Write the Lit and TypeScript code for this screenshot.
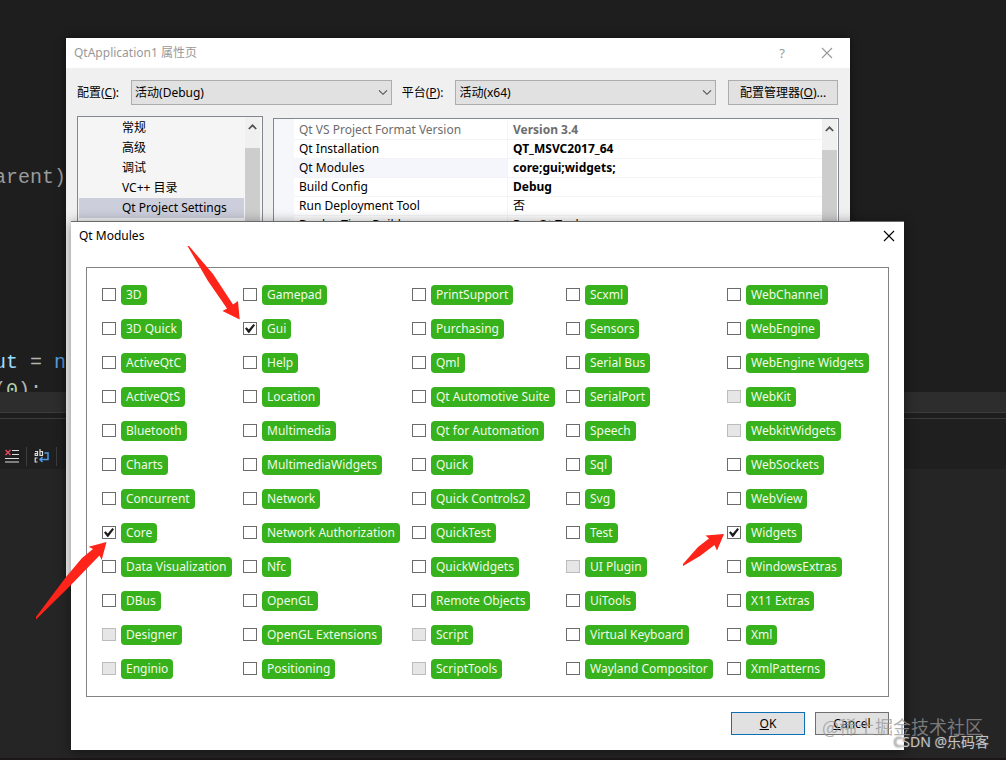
import { LitElement, html, css, svg } from "lit";
import { customElement, state } from "lit/decorators.js";

interface QtModule { name: string; off?: boolean; on?: boolean; }

const off = (name: string): QtModule => ({ name, off: true });
const on = (name: string): QtModule => ({ name, on: true });
const mod = (name: string): QtModule => ({ name });

const MODULES: QtModule[][] = [
  [...["3D", "3D Quick", "ActiveQtC", "ActiveQtS", "Bluetooth", "Charts", "Concurrent"].map(mod),
    on("Core"), mod("Data Visualization"), mod("DBus"), off("Designer"), off("Enginio")],
  [mod("Gamepad"), on("Gui"), ...["Help", "Location", "Multimedia", "MultimediaWidgets", "Network",
    "Network Authorization", "Nfc", "OpenGL", "OpenGL Extensions", "Positioning"].map(mod)],
  [...["PrintSupport", "Purchasing", "Qml", "Qt Automotive Suite", "Qt for Automation", "Quick",
    "Quick Controls2", "QuickTest", "QuickWidgets", "Remote Objects"].map(mod), off("Script"), off("ScriptTools")],
  [...["Scxml", "Sensors", "Serial Bus", "SerialPort", "Speech", "Sql", "Svg", "Test"].map(mod),
    off("UI Plugin"), ...["UiTools", "Virtual Keyboard", "Wayland Compositor"].map(mod)],
  [...["WebChannel", "WebEngine", "WebEngine Widgets"].map(mod), off("WebKit"), off("WebkitWidgets"),
    ...["WebSockets", "WebView"].map(mod), on("Widgets"),
    ...["WindowsExtras", "X11 Extras", "Xml", "XmlPatterns"].map(mod)],
];

const PROPS = [
  { name: "Qt VS Project Format Version", value: "Version 3.4", cls: "dim strong" },
  { name: "Qt Installation", value: "QT_MSVC2017_64", cls: "strong" },
  { name: "Qt Modules", value: "core;gui;widgets;", cls: "strong picked" },
  { name: "Build Config", value: "Debug", cls: "strong" },
  { name: "Run Deployment Tool", value: "否", cls: "" },
  { name: "Deploy Time Build", value: "Run Qt Tools", cls: "" },
];

const closeIcon = svg`<svg width="12" height="12" viewBox="0 0 12 12"><path d="M1 1 11 11M11 1 1 11" fill="none" stroke="currentColor" stroke-width="1.1"/></svg>`;
const upIcon = svg`<svg width="9" height="6" viewBox="0 0 9 6"><path d="M.8 5 4.500 1.300 8.200 5" fill="none" stroke="#505050" stroke-width="1.700"/></svg>`;

const FONT = css`"Noto Sans", "Noto Sans CJK SC", sans-serif`;

@customElement("editor-backdrop")
class EditorBackdrop extends LitElement {
  static styles = css`
    :host { display: flex; flex-direction: column; height: 100%; background: #1e1e1e; color: #9b9b9b; overflow: hidden; }
    .code { height: 392px; overflow: hidden; display: flex; flex-direction: column; box-sizing: border-box; padding-top: 164px;
      font: 20px/28px "Liberation Mono", monospace; white-space: pre; }
    .line { margin: 0; height: 28px; width: 66px; display: flex; justify-content: flex-end; flex: none; }
    .gap { height: 157px; flex: none; }
    .var { color: #9cdcfe; }
    .kw { color: #569cd6; }
    .num { color: #b5cea8; }
    .eq { color: #b4b4b4; }
    .scroll { height: 20px; background: #2d2d2e; border-bottom: 1px solid #3c3c3d; }
    .split { height: 5px; border-bottom: 1px solid #3c3c3d; }
    .tools { height: 50px; box-sizing: border-box; padding: 24px 5px 0; display: flex; align-items: center; gap: 7px; background: #1f1f20; }
    .bar { width: 1px; height: 19px; background: #3d3d40; }
    .pane { flex: 1; background: #252526; border-bottom: 2px solid #1b1718; }
  `;
  render() {
    return html`
      <div class="code">
        <p class="line">arent)</p>
        <div class="gap"></div>
        <p class="line"><span class="var">ut</span><span class="eq"> = </span><span class="kw">n</span></p>
        <p class="line"><span class="eq">(</span><span class="num">0</span><span class="eq">);  </span></p>
      </div>
      <div class="scroll"></div>
      <div class="split"></div>
      <div class="tools">
        <svg width="14" height="14" viewBox="0 0 14 14"><path d="M7 1.500h7M7 5.500h7M0 9.500h14M0 13h14" stroke="#ddd" stroke-width="1.200"/><path d="M.5 1 5.500 6M5.500 1 .5 6" stroke="#e0485e" stroke-width="1.500"/></svg>
        <div class="bar"></div>
        <svg width="15" height="14" viewBox="0 0 15 14" fill="none"><g stroke="#ddd" stroke-width="1.200"><path d="M1 2.500h2.500v4H1.200v-2h2.300"/><path d="M6 0v6.500h2.500v-4H6"/><path d="M3.500 9H1.200v4h2.300"/></g><path d="M10.500 4h3.500v6.500H6M8.500 8 6 10.500 8.500 13" stroke="#4c9be8" stroke-width="1.500"/></svg>
        <div class="bar"></div>
      </div>
      <div class="pane"></div>`;
  }
}

@customElement("property-window")
class PropertyWindow extends LitElement {
  static styles = css`
    :host { display: flex; flex-direction: column; background: #f0f0f0; color: #000; font: 12px/20px ${FONT}; overflow: hidden; }
    button, select { font: inherit; color: inherit; }
    .title { display: flex; align-items: center; height: 30px; background: #fff; color: #999; padding: 0 17px 0 8px; flex: none; }
    .title h1 { font: inherit; margin: 0; flex: 1; }
    .plain { border: 0; background: none; padding: 0; width: 12px; display: grid; place-items: center; }
    .help { margin-right: 33px; font-size: 13px; }
    .config { display: flex; align-items: center; padding: 12px 12px 0 11px; height: 25px; flex: none; }
    .config label { white-space: nowrap; }
    .combo { position: relative; flex: 1; display: flex; margin-left: 12px; }
    .combo select { flex: 1; min-width: 0; height: 25px; appearance: none; border: 1px solid #adadad; border-radius: 0; background: #e1e1e1; padding: 0 3px; }
    .combo svg { position: absolute; right: 4px; top: 9px; pointer-events: none; }
    .label2 { margin-left: 10px; }
    .manager { width: 110px; height: 25px; margin-left: 12px; padding: 0; border: 1px solid #adadad; background: #e1e1e1; white-space: nowrap; }
    .body { display: flex; gap: 10px; padding: 11px 11px 12px; flex: 1; min-height: 0; align-items: stretch; }
    .tree { width: 184px; flex: none; border: 1px solid #828790; background: #f5f5f5; display: flex; }
    .tree ul { list-style: none; margin: 0; padding: 1px; flex: 1; }
    .tree li { padding-left: 43px; height: 20px; white-space: nowrap; }
    .tree li.sel { background: #cccedb; }
    .rail { width: 15px; flex: none; background: #f0f0f0; display: flex; flex-direction: column; align-items: center; margin-right: 2px; }
    .rail svg { margin: 7px 0 18px; flex: none; }
    .thumb { background: #cdcdcd; width: 100%; flex: 1; }
    .sheet { flex: 1; min-width: 0; border: 1px solid #828790; margin-top: 2px; background: #fff; display: flex; overflow: hidden; }
    .sheet .rail { margin-right: 1px; }
    .margin { width: 20px; background: #f5f7fb; flex: none; }
    table { border-collapse: collapse; width: 100%; table-layout: fixed; margin-top: 2px; }
    .grow { flex: 1; min-width: 0; }
    td, th { height: 18px; line-height: 18px; padding: 0 0 0 5px; border-bottom: 1px solid #f3f4f7; font-weight: 400; text-align: left; white-space: nowrap; }
    th { width: 208px; border-right: 1px solid #f3f4f7; }
    .strong td { font-weight: 700; }
    .dim td, .dim th { color: #6d6d6d; }
    .picked th { background: #f4f6fc; }
  `;
  render() {
    const chevron = html`<svg width="10" height="7" viewBox="0 0 10 7"><path d="M1 1.300 5 5.300 9 1.300" fill="none" stroke="#505050" stroke-width="1.100"/></svg>`;
    return html`
      <div class="title"><h1>QtApplication1 属性页</h1>
        <button class="plain help" aria-label="Help">?</button>
        <button class="plain" aria-label="Close">${closeIcon}</button></div>
      <div class="config">
        <label for="cfg">配置(<u>C</u>):</label>
        <div class="combo"><select id="cfg"><option>活动(Debug)</option></select>${chevron}</div>
        <label class="label2" for="plat">平台(<u>P</u>):</label>
        <div class="combo"><select id="plat"><option>活动(x64)</option></select>${chevron}</div>
        <button class="manager">配置管理器(<u>O</u>)...</button>
      </div>
      <div class="body">
        <div class="tree">
          <ul>${["常规", "高级", "调试", "VC++ 目录", "Qt Project Settings"].map((t, i) => html`<li class=${i === 4 ? "sel" : ""}>${t}</li>`)}</ul>
          <div class="rail">${upIcon}<div class="thumb"></div></div>
        </div>
        <div class="sheet">
          <div class="margin"></div>
          <div class="grow"><table>${PROPS.map((p) => html`<tr class=${p.cls}><th scope="row">${p.name}</th><td>${p.value}</td></tr>`)}</table></div>
          <div class="rail">${upIcon}<div class="thumb"></div></div>
        </div>
      </div>`;
  }
}

@customElement("modules-dialog")
class ModulesDialog extends LitElement {
  @state() columns = MODULES;
  static styles = css`
    :host { display: block; box-sizing: border-box; background: #fff; border-top: 1px solid #6a6a6a; color: #000; font: 12px/20px ${FONT}; }
    .title { display: flex; align-items: center; height: 28px; padding: 0 9px 0 8px; }
    h2 { font: inherit; margin: 0; flex: 1; }
    .close { border: 0; background: none; padding: 0; width: 12px; display: grid; color: #000; }
    .box { margin: 17px 15px 0; border: 1px solid #838383; padding: 17px 14px 17px 15px; display: grid;
      grid-template-columns: minmax(0, 141fr) minmax(0, 169fr) minmax(0, 154fr) minmax(0, 161fr) minmax(0, 147fr); }
    .col { display: flex; flex-direction: column; gap: 14px; align-items: flex-start; }
    label { display: flex; align-items: flex-start; gap: 5px; height: 20px; white-space: nowrap; }
    .pill { background: #37b11c; color: #f0fbe9; border-radius: 4px; padding: 0 5px; }
    input { appearance: none; margin: 3px 0 0; width: 14px; height: 13px; border: 1px solid #6b6b6b; background: #fff; flex: none; display: grid; place-items: center; }
    input:disabled { background: #e6e6e6; border-color: #bcbcbc; }
    input:checked::before { content: ""; width: 10px; height: 9px; background: #1c1c1c; clip-path: polygon(0 50%, 16% 36%, 38% 62%, 84% 0, 100% 14%, 42% 100%, 34% 100%); }
    .actions { display: flex; justify-content: flex-end; gap: 10px; padding: 15px 15px 0; }
    .actions button { font: inherit; color: #000; width: 74px; height: 23px; padding: 0; background: #e1e1e1; border: 1px solid #707070; }
    .actions .ok { border-color: #0f6fb5; }
  `;
  render() {
    return html`
      <div class="title"><h2>Qt Modules</h2><button class="close" aria-label="Close">${closeIcon}</button></div>
      <div class="box">${this.columns.map((c) => html`<div class="col">${c.map((m) => html`
        <label><input type="checkbox" .checked=${!!m.on} ?disabled=${!!m.off}><span class="pill">${m.name}</span></label>`)}</div>`)}</div>
      <div class="actions"><button class="ok"><u>O</u>K</button><button><u>C</u>ancel</button></div>`;
  }
}

@customElement("app-root")
class AppRoot extends LitElement {
  static styles = css`
    :host { display: block; position: relative; height: 100vh; overflow: hidden; }
    property-window { position: absolute; left: 66px; top: 38px; width: 784px; height: 541px; box-shadow: 0 0 8px rgba(0,0,0,.5); }
    modules-dialog { position: absolute; left: 71px; top: 221px; width: 833px; height: 529px; box-shadow: 0 2px 12px rgba(0,0,0,.45); }
    .arrows { position: absolute; left: 0; top: 0; pointer-events: none; }
    .mark { position: absolute; right: 23px; top: 715px; margin: 0; font: 18px/22px "Noto Sans CJK SC", sans-serif; color: rgba(150,150,150,.75); }
    .credit { position: absolute; right: 17px; top: 732px; margin: 0; font: 14px/20px "Noto Sans", "Noto Sans CJK SC", sans-serif; color: #c4c4c4; text-shadow: 0 0 2px #555; }
  `;
  render() {
    return html`
      <editor-backdrop></editor-backdrop>
      <property-window></property-window>
      <modules-dialog></modules-dialog>
      <svg class="arrows" width="1006" height="760" viewBox="0 0 1006 760" fill="#fe2419" aria-hidden="true">
        <path d="M187.500 246 189 246 213 274 233 304.500 238 301 239.700 319.500 222.500 311 227 308.500 208 281Z"/>
        <path d="M36 619.500 36 617 66 577 82 558 93 549 88.700 546.700 106.500 542 101.700 560 99.500 555.500 68 588Z"/>
        <path d="M683 566 683 564 698 547 709 538.500 705.500 535.500 724 534 717 550.500 714.500 545 700 556Z"/>
      </svg>
      <p class="mark">@稀土掘金技术社区</p>
      <p class="credit">CSDN @乐码客</p>`;
  }
}
